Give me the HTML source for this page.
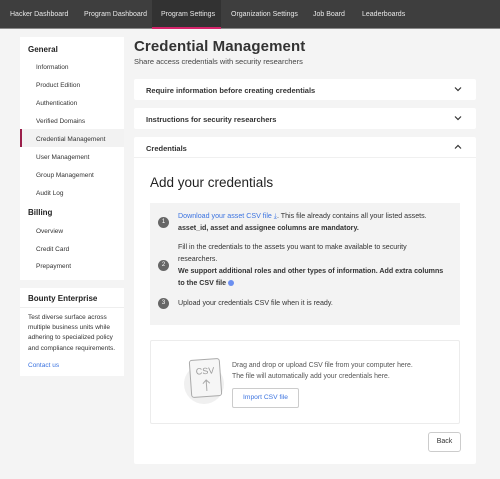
<!DOCTYPE html>
<html><head><style>
*{box-sizing:border-box;margin:0;padding:0}
body{width:500px;height:479px;background:#f4f4f4;font-family:"Liberation Sans",sans-serif;color:#222;position:relative;overflow:hidden;font-size:7px}
.nav{position:absolute;left:0;top:0;width:500px;height:29px;background:#3e3e3e;border-bottom:1px solid #888}
.nav span{position:absolute;top:11px;color:#e8e8e8;font-size:7px}
.nav .act{position:absolute;left:152px;top:0;width:69px;height:29px;background:#323232;border-bottom:2px solid #d4246a}
.side{position:absolute;left:20px;top:37px;width:104px;height:243px;background:#fff}
.side div{position:absolute;font-size:6.5px;color:#333}
.side .h{left:8px;font-weight:bold;font-size:8px;color:#222}
.side .i{left:16px}
.sel{position:absolute;left:0;top:92px;width:104px;height:18px;background:#f2f2f2;border-left:2px solid #9b1f4a}
.bb{position:absolute;left:20px;top:288px;width:104px;height:88px;background:#fff}
.card{position:absolute;left:134px;width:342px;background:#fff;border-radius:2px}
.row{height:21px;font-size:7.5px;font-weight:bold;padding:7px 0 0 12px;color:#333}
.chev{position:absolute;right:14px;top:7px}
.n{position:absolute;left:8px;width:11px;height:11px;border-radius:50%;background:#666;color:#fff;font-size:6px;text-align:center;line-height:11px}
</style></head><body>
<div class="nav">
<div class="act"></div>
<span style="left:10px">Hacker Dashboard</span>
<span style="left:84px">Program Dashboard</span>
<span style="left:161px">Program Settings</span>
<span style="left:231px">Organization Settings</span>
<span style="left:313px">Job Board</span>
<span style="left:362px">Leaderboards</span>
</div>
<div class="side">
<div class="sel"></div>
<div class="h" style="top:8px">General</div>
<div class="i" style="top:27px">Information</div>
<div class="i" style="top:45px">Product Edition</div>
<div class="i" style="top:63px">Authentication</div>
<div class="i" style="top:81px">Verified Domains</div>
<div class="i" style="top:99px">Credential Management</div>
<div class="i" style="top:117px">User Management</div>
<div class="i" style="top:135px">Group Management</div>
<div class="i" style="top:153px">Audit Log</div>
<div class="h" style="top:171px">Billing</div>
<div class="i" style="top:191px">Overview</div>
<div class="i" style="top:209px">Credit Card</div>
<div class="i" style="top:226px">Prepayment</div>
</div>
<div class="bb">
<div style="position:absolute;left:8px;top:6px;font-size:8px;font-weight:bold">Bounty Enterprise</div>
<div style="position:absolute;left:0;top:19px;width:104px;border-top:1px solid #eee"></div>
<div style="position:absolute;left:8px;top:25px;width:96px;font-size:6.5px;line-height:10.2px;color:#333">Test diverse surface across multiple business units while adhering to specialized policy and compliance requirements.</div>
<div style="position:absolute;left:8px;top:74px;font-size:6.5px;color:#3b73e0">Contact us</div>
</div>
<div style="position:absolute;left:134px;top:38px;font-size:15px;color:#333;font-weight:bold;letter-spacing:0.1px">Credential Management</div>
<div style="position:absolute;left:134px;top:57px;font-size:7.5px;color:#444">Share access credentials with security researchers</div>
<div class="card" style="top:79px"><div class="row">Require information before creating credentials</div><svg class="chev" width="8" height="6"><path d="M1 1.5L4 4.5 7 1.5" stroke="#333" fill="none" stroke-width="1.2"/></svg></div>
<div class="card" style="top:108px"><div class="row">Instructions for security researchers</div><svg class="chev" width="8" height="6"><path d="M1 1.5L4 4.5 7 1.5" stroke="#333" fill="none" stroke-width="1.2"/></svg></div>
<div class="card" style="top:137px;height:327px">
<div class="row" style="border-bottom:1px solid #f0f0f0">Credentials</div><svg class="chev" width="8" height="6"><path d="M1 4.5L4 1.5 7 4.5" stroke="#333" fill="none" stroke-width="1.2"/></svg>
<div style="position:absolute;left:16px;top:38px;font-size:13.5px;color:#222">Add your credentials</div>
<div style="position:absolute;left:16px;top:66px;width:310px;height:122px;background:#f3f3f3;font-size:7.1px;line-height:12px;color:#333">
<div style="position:absolute;left:28px;top:7px;width:282px;white-space:nowrap"><span style="color:#3b73e0">Download your asset CSV file ⤓</span>. This file already contains all your listed assets.<br><b>asset_id, asset and assignee columns are mandatory.</b></div>
<div style="position:absolute;left:28px;top:38px;width:282px;white-space:nowrap">Fill in the credentials to the assets you want to make available to security<br>researchers.<br><b>We support additional roles and other types of information. Add extra columns<br>to the CSV file</b> <span style="display:inline-block;width:6px;height:6px;border-radius:50%;background:#6b8ff0;vertical-align:-1px"></span></div>
<div style="position:absolute;left:28px;top:94px">Upload your credentials CSV file when it is ready.</div>
<div class="n" style="top:14px">1</div>
<div class="n" style="top:57px">2</div>
<div class="n" style="top:95px">3</div>
</div>
<div style="position:absolute;left:16px;top:203px;width:310px;height:84px;border:1px solid #ececec;border-radius:2px">
<div style="position:absolute;left:33px;top:23px;width:40px;height:40px;border-radius:50%;background:#f0f0f0"></div>
<div style="position:absolute;left:39px;top:18px;width:31px;height:38px;border:1.5px solid #aaa;border-radius:3px;background:#f6f6f6;transform:rotate(-4deg);color:#999;font-size:9px;text-align:center;padding-top:6px">CSV<svg width="10" height="14" style="display:block;margin:2px auto 0"><path d="M5 13V2M1.5 5.5L5 2 8.5 5.5" stroke="#aaa" fill="none" stroke-width="1"/></svg></div>
<div style="position:absolute;left:81px;top:19px;font-size:6.9px;line-height:11px;color:#555">Drag and drop or upload CSV file from your computer here.<br>The file will automatically add your credentials here.</div>
<div style="position:absolute;left:81px;top:47px;width:67px;height:20px;border:1px solid #ccc;border-radius:2px;font-size:6.7px;color:#3b73e0;text-align:center;line-height:18px">Import CSV file</div>
</div>
<div style="position:absolute;left:294px;top:295px;width:33px;height:20px;border:1px solid #ccc;border-radius:3px;font-size:7px;text-align:center;line-height:18px;color:#333">Back</div>
</div>
</body></html>
